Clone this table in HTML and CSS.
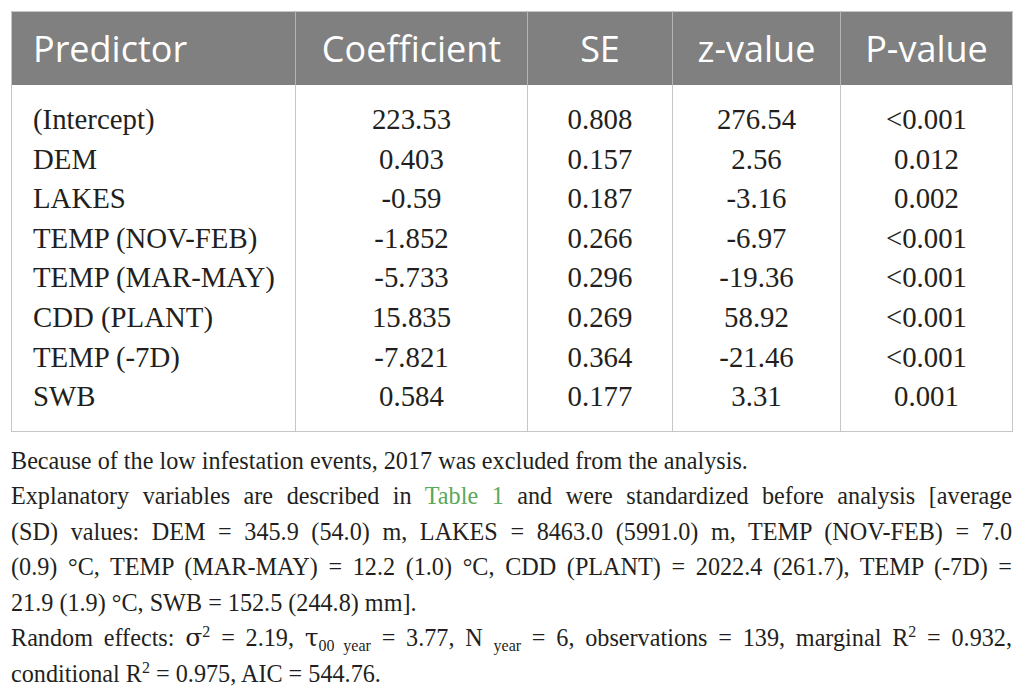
FILE: index.html
```html
<!DOCTYPE html>
<html lang="en">

<head>
	<meta charset="UTF-8">
	<meta name="viewport" content="width=device-width, initial-scale=1.0">
	<title>Mixed model results</title>
	<link rel="stylesheet" href="styles.css">
</head>

<body>
	<div class="container">
		<table class="results">
			<thead>
				<tr>
					<th class="col-predictor">Predictor</th>
					<th class="col-coef">Coefficient</th>
					<th class="col-se">SE</th>
					<th class="col-z">z-value</th>
					<th class="col-p">P-value</th>
				</tr>
			</thead>
			<tbody>
				<tr><td>(Intercept)</td><td>223.53</td><td>0.808</td><td>276.54</td><td>&lt;0.001</td></tr>
				<tr><td>DEM</td><td>0.403</td><td>0.157</td><td>2.56</td><td>0.012</td></tr>
				<tr><td>LAKES</td><td>-0.59</td><td>0.187</td><td>-3.16</td><td>0.002</td></tr>
				<tr><td>TEMP (NOV-FEB)</td><td>-1.852</td><td>0.266</td><td>-6.97</td><td>&lt;0.001</td></tr>
				<tr><td>TEMP (MAR-MAY)</td><td>-5.733</td><td>0.296</td><td>-19.36</td><td>&lt;0.001</td></tr>
				<tr><td>CDD (PLANT)</td><td>15.835</td><td>0.269</td><td>58.92</td><td>&lt;0.001</td></tr>
				<tr><td>TEMP (-7D)</td><td>-7.821</td><td>0.364</td><td>-21.46</td><td>&lt;0.001</td></tr>
				<tr><td>SWB</td><td>0.584</td><td>0.177</td><td>3.31</td><td>0.001</td></tr>
			</tbody>
		</table>

		<!-- footnotes keep the printed line breaks -->
		<div class="notes">
			<p>Because of the low infestation events, 2017 was excluded from the analysis.</p>
			<p>
				<span class="line full">Explanatory variables are described in <a href="#table1">Table 1</a> and were standardized before analysis [average</span>
				<span class="line full">(SD) values: DEM = 345.9 (54.0) m, LAKES = 8463.0 (5991.0) m, TEMP (NOV-FEB) = 7.0</span>
				<span class="line full">(0.9) °C, TEMP (MAR-MAY) = 12.2 (1.0) °C, CDD (PLANT) = 2022.4 (261.7), TEMP (-7D) =</span>
				<span class="line">21.9 (1.9) °C, SWB = 152.5 (244.8) mm].</span>
			</p>
			<p>
				<span class="line full">Random effects: <span class="greek">σ</span><sup>2</sup> = 2.19, <span class="greek">τ</span><sub>00 year</sub> = 3.77, N <sub>year</sub> = 6, observations = 139, marginal R<sup>2</sup> = 0.932,</span>
				<span class="line">conditional R<sup>2</sup> = 0.975, AIC = 544.76.</span>
			</p>
		</div>
	</div>
</body>

</html>
```

FILE: styles.css
```css
body {
	margin: 0;
	padding: 0;
	background-color: #ffffff;
	color: #231f20;
	font-family: "Liberation Serif", "Times New Roman", serif;
}

.container {
	padding: 11px 14px 0 11px;
}

.results {
	width: 1001px;
	border-collapse: collapse;
	border: 1px solid #c6c6c6;
	table-layout: fixed;
}

.results th,
.results td {
	box-sizing: border-box;
}

.results th {
	background-color: #808080;
	color: #ffffff;
	font-family: "Open Sans", "Noto Sans", sans-serif;
	font-weight: normal;
	font-size: 36px;
	line-height: 49px;
	padding: 12px 0 12px;
	text-align: center;
	border-left: 1px solid #b4b4b4;
}

.results th.col-predictor {
	text-align: left;
	padding-left: 21px;
	border-left: none;
}

.col-predictor { width: 284px; }
.col-coef { width: 232px; }
.col-se { width: 145px; }
.col-z { width: 168px; }
.col-p { width: 172px; }

.results td {
	font-size: 28.8px;
	line-height: 39.6px;
	padding: 0;
	text-align: center;
	border-left: 1px solid #c6c6c6;
}

.results td:first-child {
	text-align: left;
	padding-left: 21px;
	border-left: none;
}

.results tbody tr:first-child td {
	padding-top: 15px;
}

.results tbody tr:last-child td {
	padding-bottom: 14px;
}

.notes {
	width: 1001px;
	margin-top: 11px;
	font-size: 24.2px;
	line-height: 35.5px;
}

.notes p {
	margin: 0;
}

.notes .line {
	display: block;
	text-align: left;
}

.notes .line.full {
	text-align: justify;
	text-align-last: justify;
}

.notes a {
	color: #5aa85a;
	text-decoration: none;
}

.notes sup,
.notes sub {
	font-size: 16px;
	line-height: 0;
}

.notes sup {
	vertical-align: 9px;
}

.notes sub {
	vertical-align: -5px;
}

.greek {
	font-family: "DejaVu Serif", serif;
	font-size: 25px;
}
```
